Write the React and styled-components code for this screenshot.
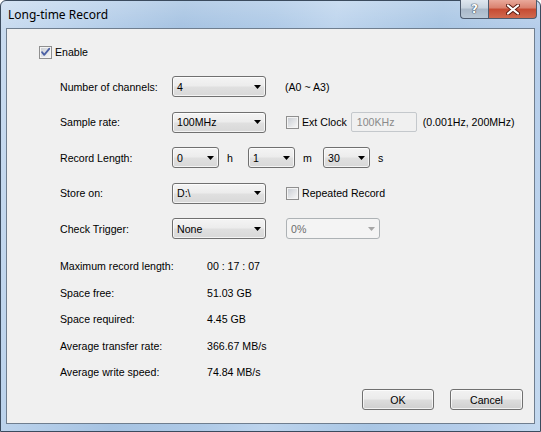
import React from 'react'
import styled, { createGlobalStyle } from 'styled-components'

const GlobalStyle = createGlobalStyle`
    html, body {
        margin: 0;
        padding: 0;
        background: #ffffff;
    }
    body {
        font-family: "Liberation Sans", Arial, sans-serif;
        font-size: 10.6px;
        color: #000;
    }
`

const CheckBox = ({ checked }) => (
    <BoxWrap>
        <svg width="13" height="13" viewBox="0 0 13 13">
            <defs>
                <linearGradient id="cbin" x1="0" y1="0" x2="1" y2="1">
                    <stop offset="0" stopColor="#cbcfd5" />
                    <stop offset="1" stopColor="#f6f6f6" />
                </linearGradient>
            </defs>
            <rect x="0.5" y="0.5" width="12" height="12" fill="#f4f4f4" stroke="#8f8f8f" />
            <rect x="2" y="2" width="9" height="9" fill="url(#cbin)" />
            {checked && (
                <path
                    d="M3 6.2 L5.2 8.8 L10.2 2.8"
                    fill="none"
                    stroke="#4c61a5"
                    strokeWidth="1.8"
                    strokeLinecap="round"
                    strokeLinejoin="round"
                />
            )}
        </svg>
    </BoxWrap>
)

const Arrow = ({ disabled }) => (
    <svg width="7" height="4" viewBox="0 0 7 4">
        <path d="M0 0 H7 L3.5 4 Z" fill={disabled ? '#a6a6a6' : '#000'} />
    </svg>
)

const Select = ({ value, width, disabled }) => (
    <Combo $width={width} $disabled={disabled}>
        <span>{value}</span>
        <Arrow disabled={disabled} />
    </Combo>
)

const App = () => {
    return (
        <>
            <GlobalStyle />
            <Window>
                <TitleBar>
                    <Title>Long-time Record</Title>
                    <Caption>
                        <HelpButton>?</HelpButton>
                        <CloseButton>
                            <svg width="14" height="11" viewBox="0 0 14 11">
                                <path
                                    d="M2 1.5 L12 9.5 M12 1.5 L2 9.5"
                                    stroke="#5a1a10"
                                    strokeWidth="4"
                                    strokeLinecap="round"
                                />
                                <path
                                    d="M2 1.5 L12 9.5 M12 1.5 L2 9.5"
                                    stroke="#ffffff"
                                    strokeWidth="2.2"
                                    strokeLinecap="round"
                                />
                            </svg>
                        </CloseButton>
                    </Caption>
                </TitleBar>

                <Client>
                    <EnableRow>
                        <CheckBox checked />
                        <CheckText>Enable</CheckText>
                    </EnableRow>

                    <Form>
                        <Row>
                            <Label>Number of channels:</Label>
                            <Select value="4" width={94} />
                            <Note $gap={19}>(A0 ~ A3)</Note>
                        </Row>
                        <Row>
                            <Label>Sample rate:</Label>
                            <Select value="100MHz" width={94} />
                            <CheckGroup>
                                <CheckBox />
                                <CheckText>Ext Clock</CheckText>
                            </CheckGroup>
                            <TextBox>100KHz</TextBox>
                            <Note $gap={6}>(0.001Hz, 200MHz)</Note>
                        </Row>
                        <Row>
                            <Label>Record Length:</Label>
                            <Select value="0" width={47} />
                            <Unit $width={29}>h</Unit>
                            <Select value="1" width={47} />
                            <Unit $width={28}>m</Unit>
                            <Select value="30" width={47} />
                            <Unit $width={20}>s</Unit>
                        </Row>
                        <Row>
                            <Label>Store on:</Label>
                            <Select value="D:\" width={94} />
                            <CheckGroup>
                                <CheckBox />
                                <CheckText>Repeated Record</CheckText>
                            </CheckGroup>
                        </Row>
                        <Row>
                            <Label>Check Trigger:</Label>
                            <Select value="None" width={94} />
                            <Spacer />
                            <Select value="0%" width={94} disabled />
                        </Row>
                    </Form>

                    <Info>
                        <span>Maximum record length:</span>
                        <span>00 : 17 : 07</span>
                        <span>Space free:</span>
                        <span>51.03 GB</span>
                        <span>Space required:</span>
                        <span>4.45 GB</span>
                        <span>Average transfer rate:</span>
                        <span>366.67 MB/s</span>
                        <span>Average write speed:</span>
                        <span>74.84 MB/s</span>
                    </Info>

                    <Footer>
                        <Button $width={72}>OK</Button>
                        <Button $width={73}>Cancel</Button>
                    </Footer>
                </Client>
            </Window>
        </>
    )
}

export default App

const Window = styled.div`
    width: 541px;
    height: 432px;
    box-sizing: border-box;
    display: flex;
    flex-direction: column;
    border: 1px solid #3b4b5e;
    border-radius: 6px 6px 0 0;
    padding: 0 5px 7px;
    background:
        linear-gradient(180deg, rgba(255, 255, 255, 0.2) 0px, rgba(255, 255, 255, 0) 28px),
        linear-gradient(100deg, #cadcf0 0%, #bcd3ec 12%, #a6c3e2 30%, #afcae7 45%, #bdd4ed 55%, #a9c6e4 72%, #b5cdea 88%, #c4d9ef 100%);
`

const TitleBar = styled.div`
    height: 27px;
    display: flex;
    justify-content: space-between;
    align-items: flex-start;
`

const Title = styled.div`
    font-family: "Noto Sans", "Open Sans", sans-serif;
    font-size: 12px;
    line-height: 27px;
    padding-left: 2px;
    color: #000;
`

const Caption = styled.div`
    display: flex;
    margin-top: -1px;
    margin-right: -2px;
`

const CaptionButton = styled.div`
    height: 19px;
    box-sizing: border-box;
    border: 1px solid #4d5b6e;
    border-top: none;
    display: flex;
    align-items: center;
    justify-content: center;
`

const HelpButton = styled(CaptionButton)`
    width: 28px;
    border-right: none;
    border-radius: 0 0 0 4px;
    background: linear-gradient(180deg, #dfe7ef 0%, #c7d3df 45%, #a9b8c8 50%, #b8c7d6 100%);
    font-family: "DejaVu Sans", sans-serif;
    font-size: 12px;
    font-weight: bold;
    color: #ffffff;
    text-shadow: 0 0 1px #3a4654, 0 0 1px #3a4654, 0 0 1px #3a4654;
`

const CloseButton = styled(CaptionButton)`
    width: 49px;
    border-radius: 0 0 4px 0;
    background: linear-gradient(180deg, #e9a99b 0%, #d9806d 45%, #c64a32 50%, #d06a4f 100%);
`

const Client = styled.div`
    flex: 1;
    display: flex;
    flex-direction: column;
    border: 1px solid #6f7e8f;
    background: #f0f0f0;
    padding: 17px 11px 13px 32px;
`

const EnableRow = styled.div`
    display: flex;
    align-items: center;
    height: 13px;
`

const BoxWrap = styled.span`
    display: inline-flex;
    width: 13px;
    height: 13px;
    flex-shrink: 0;
`

const CheckText = styled.span`
    margin-left: 3px;
    line-height: 13px;
`

const Form = styled.div`
    display: flex;
    flex-direction: column;
    gap: 14.5px;
    margin: 17px 0 0 21px;
`

const Row = styled.div`
    display: flex;
    align-items: center;
    height: 21px;
`

const Label = styled.div`
    width: 112px;
    flex-shrink: 0;
`

const Combo = styled.div`
    width: ${(p) => p.$width}px;
    height: 21px;
    box-sizing: border-box;
    display: flex;
    align-items: center;
    justify-content: space-between;
    padding: 0 4px 0 4px;
    border: 1px solid ${(p) => (p.$disabled ? '#adb2b5' : '#707070')};
    border-radius: 3px;
    color: ${(p) => (p.$disabled ? '#6d6d6d' : '#000')};
    background: ${(p) =>
        p.$disabled
            ? '#f4f4f4'
            : 'linear-gradient(180deg, #f4f4f4 0%, #ececec 48%, #e0e0e0 52%, #d8d8d8 100%)'};
    box-shadow: inset 0 0 0 1px ${(p) => (p.$disabled ? '#f4f4f4' : 'rgba(255, 255, 255, 0.7)')};
`

const Note = styled.span`
    margin-left: ${(p) => p.$gap}px;
    white-space: nowrap;
`

const CheckGroup = styled.div`
    display: flex;
    align-items: center;
    margin-left: 20px;
`

const TextBox = styled.div`
    width: 66px;
    height: 20px;
    box-sizing: border-box;
    margin-left: 4px;
    padding-left: 5px;
    display: flex;
    align-items: center;
    border: 1px solid #c4c8cc;
    border-radius: 2px;
    background: #f0f0f0;
    color: #8a8a8a;
`

const Unit = styled.span`
    width: ${(p) => p.$width}px;
    padding-left: 8px;
    box-sizing: border-box;
`

const Spacer = styled.span`
    width: 20px;
`

const Info = styled.div`
    display: grid;
    grid-template-columns: 147px auto;
    row-gap: 12.5px;
    margin: 20px 0 0 21px;
    line-height: 14px;
`

const Footer = styled.div`
    margin-top: auto;
    display: flex;
    justify-content: flex-end;
    gap: 16px;
`

const Button = styled.div`
    width: ${(p) => p.$width}px;
    height: 21px;
    box-sizing: border-box;
    display: flex;
    align-items: center;
    justify-content: center;
    border: 1px solid #707070;
    border-radius: 3px;
    background: linear-gradient(180deg, #f2f2f2 0%, #ebebeb 48%, #dddddd 52%, #cfcfcf 100%);
    box-shadow: inset 0 0 0 1px rgba(255, 255, 255, 0.7);
`
